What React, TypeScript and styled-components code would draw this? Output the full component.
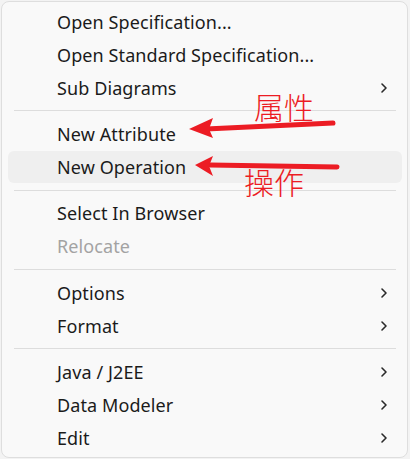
import React from 'react';
import styled, { createGlobalStyle } from 'styled-components';

type Item = { label: string; sub?: boolean; disabled?: boolean; hover?: boolean };

const groups: Item[][] = [
    [
        { label: 'Open Specification...' },
        { label: 'Open Standard Specification...' },
        { label: 'Sub Diagrams', sub: true },
    ],
    [
        { label: 'New Attribute' },
        { label: 'New Operation', hover: true },
    ],
    [
        { label: 'Select In Browser' },
        { label: 'Relocate', disabled: true },
    ],
    [
        { label: 'Options', sub: true },
        { label: 'Format', sub: true },
    ],
    [
        { label: 'Java / J2EE', sub: true },
        { label: 'Data Modeler', sub: true },
        { label: 'Edit', sub: true },
    ],
];

const Chevron = () => (
    <svg width="8" height="12" viewBox="0 0 8 12">
        <path d="M2 2 L6 6 L2 10" fill="none" stroke="#2a2a2a" strokeWidth="1.6" strokeLinecap="round" strokeLinejoin="round" />
    </svg>
);

const App = () => {
    return (
        <Page>
            <GlobalStyle />
            <Menu>
                {groups.map((group, gi) => (
                    <React.Fragment key={gi}>
                        {gi > 0 && <Separator />}
                        {group.map(item => (
                            <Row key={item.label} $hover={item.hover} $disabled={item.disabled}>
                                <Label>{item.label}</Label>
                                {item.sub && <Chevron />}
                            </Row>
                        ))}
                    </React.Fragment>
                ))}
            </Menu>

            {/* red annotations drawn over the menu */}
            <Arrows width="410" height="459" viewBox="0 0 410 459">
                <line x1="333" y1="123" x2="206" y2="129" stroke="#ec1c24" strokeWidth="5" strokeLinecap="round" />
                <polygon points="189,129 213,118 209,129 213,138" fill="#ec1c24" />
                <line x1="337" y1="167" x2="210" y2="165" stroke="#ec1c24" strokeWidth="5" strokeLinecap="round" />
                <polygon points="195,165 213,156 209,166 213,176" fill="#ec1c24" />
            </Arrows>
            <Note $x={254} $y={88}>属性</Note>
            <Note $x={244} $y={163}>操作</Note>
        </Page>
    );
}

export default App;

const GlobalStyle = createGlobalStyle`
    html, body {
        margin:0;
        padding:0;
        background:#f3f3f3;
    }
`;

const Page = styled.div`
    position:relative;
    width:410px;
    height:459px;
    padding:1px 0 0 1px;
    box-sizing:border-box;
    font-family:"Noto Sans", "Open Sans", sans-serif;
`;

const Menu = styled.div`
    width:407px;
    box-sizing:border-box;
    background:#f9f9f9;
    border:1px solid #dedede;
    border-radius:8px;
    padding:3.6px 5px 2.6px 6px;
    display:flex;
    flex-direction:column;
`;

const Row = styled.div<{ $hover?: boolean; $disabled?: boolean }>`
    display:flex;
    align-items:center;
    justify-content:space-between;
    height:32.85px;
    padding:0 14px 0 49px;
    border-radius:6px;
    background:${p => (p.$hover ? '#efefef' : 'transparent')};
    color:${p => (p.$disabled ? '#a3a3a3' : '#1b1b1b')};
`;

const Label = styled.span`
    font-size:18px;
    letter-spacing:0.1px;
`;

const Separator = styled.div`
    height:13.6px;
    display:flex;
    align-items:center;
    padding:0 6px;
    &::after{
        content:'';
        flex:1;
        height:1px;
        background:#dddddd;
    }
`;

const Arrows = styled.svg`
    position:absolute;
    left:0;
    top:0;
    pointer-events:none;
`;

const Note = styled.div<{ $x: number; $y: number }>`
    position:absolute;
    left:${p => p.$x}px;
    top:${p => p.$y}px;
    font-family:"Noto Sans CJK SC", sans-serif;
    font-weight:300;
    font-size:30px;
    line-height:36px;
    color:#ec1c24;
`;
